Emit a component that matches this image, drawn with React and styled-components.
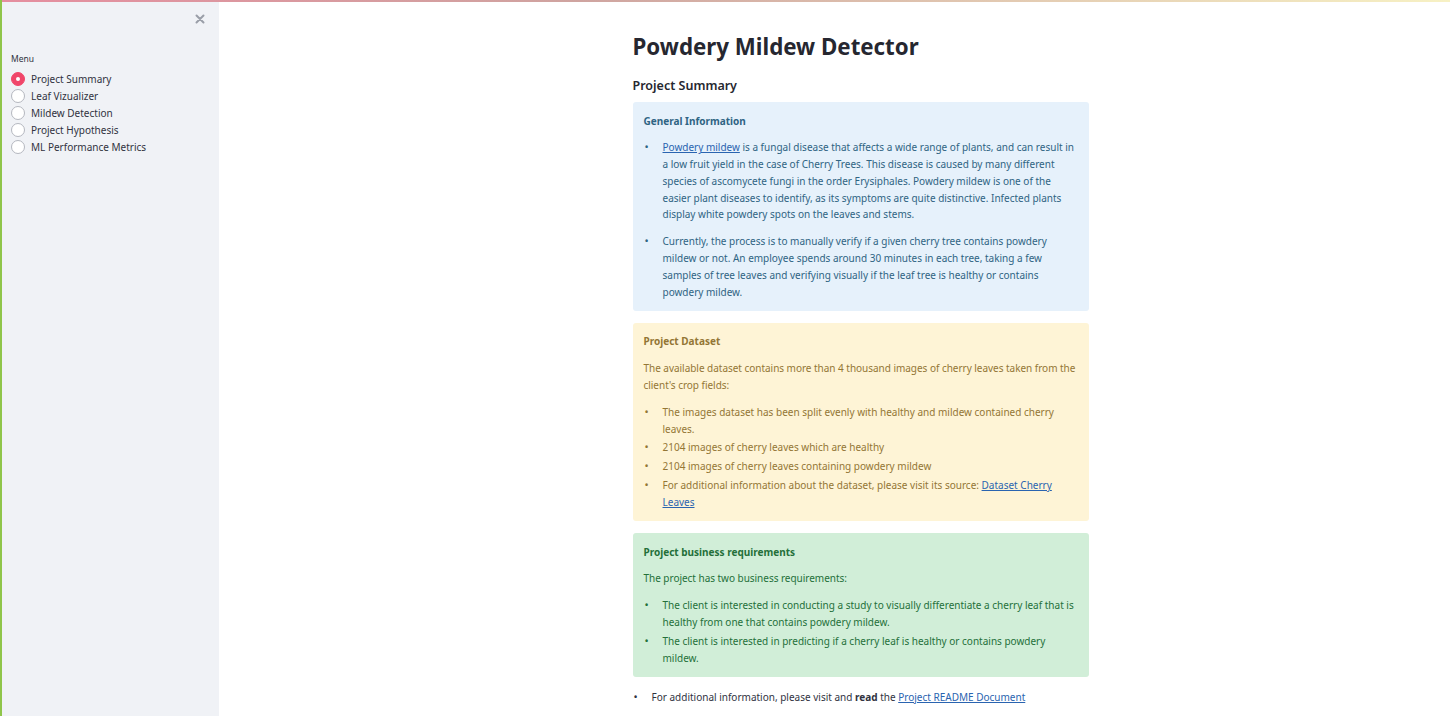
import React from "react";
import styled, { createGlobalStyle } from "styled-components";

const GlobalStyle = createGlobalStyle`
  html, body {
    margin: 0;
    padding: 0;
    background: #ffffff;
  }
  body {
    font-family: "Noto Sans", "Open Sans", sans-serif;
    color: #31333f;
  }
  * {
    box-sizing: border-box;
  }
`;

const Shell = styled.div`
  display: flex;
  flex-direction: column;
  min-height: 100vh;
  border-left: 2px solid #8fc54a;
`;

const Decoration = styled.div`
  height: 2px;
  background: linear-gradient(90deg, #e58e9f, #cfa4a0 40%, #f7f1c4);
`;

const Body = styled.div`
  display: flex;
  flex: 1;
`;

const Sidebar = styled.aside`
  width: 217px;
  flex-shrink: 0;
  background: #f0f2f6;
  display: flex;
  flex-direction: column;
`;

const SidebarTop = styled.div`
  display: flex;
  justify-content: flex-end;
  padding: 10px 12px 0 0;
  height: 51px;
`;

const CloseButton = styled.button`
  border: none;
  background: transparent;
  padding: 0;
  width: 14px;
  height: 14px;
  display: flex;
  align-items: center;
  justify-content: center;
  cursor: pointer;
`;

const MenuBlock = styled.div`
  padding: 0 0 0 9px;
  display: flex;
  flex-direction: column;
`;

const MenuLabel = styled.div`
  font-size: 8.5px;
  color: #31333f;
  margin-bottom: 7px;
`;

const RadioList = styled.div`
  display: flex;
  flex-direction: column;
`;

const RadioRow = styled.label`
  display: flex;
  align-items: center;
  gap: 6px;
  height: 16.8px;
  font-size: 10px;
  color: #31333f;
  cursor: pointer;
`;

const RadioDot = styled.span`
  width: 14px;
  height: 14px;
  border-radius: 50%;
  flex-shrink: 0;
  display: flex;
  align-items: center;
  justify-content: center;
  background: ${(p) => (p.$active ? "#f0466a" : "#ffffff")};
  border: 1px solid ${(p) => (p.$active ? "#f0466a" : "#b4b7bf")};

  &::after {
    content: "";
    width: 4px;
    height: 4px;
    border-radius: 50%;
    background: #ffffff;
    display: ${(p) => (p.$active ? "block" : "none")};
  }
`;

const Main = styled.main`
  flex: 1;
  display: flex;
  justify-content: center;
  padding-left: 52px;
`;

const Content = styled.div`
  width: 456px;
  padding-top: 31px;
  display: flex;
  flex-direction: column;
`;

const Title = styled.h1`
  margin: 0;
  font-size: 22.3px;
  line-height: 28px;
  font-weight: 700;
  color: #262730;
`;

const SubTitle = styled.h3`
  margin: 16px 0 8px;
  font-size: 12.5px;
  line-height: 17px;
  font-weight: 600;
  color: #262730;
`;

const tones = {
  info: { bg: "#e6f1fb", fg: "#2f6483" },
  warning: { bg: "#fef4d6", fg: "#937635" },
  success: { bg: "#d1eed8", fg: "#24703a" },
};

const Alert = styled.section`
  background: ${(p) => tones[p.$tone].bg};
  color: ${(p) => tones[p.$tone].fg};
  border-radius: 3px;
  padding: 10.5px 11px;
  margin-bottom: 12px;
  font-size: 10px;
  line-height: 16.8px;
`;

const AlertHeading = styled.div`
  font-weight: 700;
  margin-bottom: 10px;
`;

const Para = styled.p`
  margin: 0 0 10px;
  letter-spacing: -0.03px;
`;

const List = styled.ul`
  margin: 0;
  padding: 0;
  list-style: none;
  display: flex;
  flex-direction: column;
  gap: ${(p) => p.$gap || 0}px;
`;

const ListItem = styled.li`
  display: grid;
  grid-template-columns: 19px 1fr;

  &::before {
    content: "•";
    padding-left: 1px;
    font-size: 11px;
  }
`;

const Link = styled.a`
  color: #2a64b0;
  text-decoration: underline;
`;

const Footer = styled.div`
  font-size: 10px;
  line-height: 16.8px;
  color: #31333f;
`;

const Item = ({ children }) => (
  <ListItem>
    <span>{children}</span>
  </ListItem>
);

const menu = [
  "Project Summary",
  "Leaf Vizualizer",
  "Mildew Detection",
  "Project Hypothesis",
  "ML Performance Metrics",
];

export default function App() {
  return (
    <>
      <GlobalStyle />
      <Shell>
        <Decoration />
        <Body>
          <Sidebar>
            <SidebarTop>
              <CloseButton aria-label="Close sidebar">
                <svg width="10" height="10" viewBox="0 0 10 10">
                  <path
                    d="M1.5 1.5 L8.5 8.5 M8.5 1.5 L1.5 8.5"
                    stroke="#9a9ea8"
                    strokeWidth="2"
                    strokeLinecap="round"
                  />
                </svg>
              </CloseButton>
            </SidebarTop>
            <MenuBlock>
              <MenuLabel>Menu</MenuLabel>
              <RadioList>
                {menu.map((m, i) => (
                  <RadioRow key={m}>
                    <RadioDot $active={i === 0} />
                    {m}
                  </RadioRow>
                ))}
              </RadioList>
            </MenuBlock>
          </Sidebar>
          <Main>
            <Content>
              <Title>Powdery Mildew Detector</Title>
              <SubTitle>Project Summary</SubTitle>

              <Alert $tone="info">
                <AlertHeading>General Information</AlertHeading>
                <List $gap={10}>
                  <Item>
                    <Link href="#">Powdery mildew</Link> is a fungal disease that
                    affects a wide range of plants, and can result in a low fruit
                    yield in the case of Cherry Trees. This disease is caused by
                    many different species of ascomycete fungi in the order
                    Erysiphales. Powdery mildew is one of the easier plant diseases
                    to identify, as its symptoms are quite distinctive. Infected
                    plants display white powdery spots on the leaves and stems.
                  </Item>
                  <Item>
                    Currently, the process is to manually verify if a given cherry
                    tree contains powdery mildew or not. An employee spends around
                    30 minutes in each tree, taking a few samples of tree leaves and
                    verifying visually if the leaf tree is healthy or contains
                    powdery mildew.
                  </Item>
                </List>
              </Alert>

              <Alert $tone="warning">
                <AlertHeading>Project Dataset</AlertHeading>
                <Para>
                  The available dataset contains more than 4 thousand images of
                  cherry leaves taken from the client's crop fields:
                </Para>
                <List $gap={2}>
                  <Item>
                    The images dataset has been split evenly with healthy and
                    mildew contained cherry leaves.
                  </Item>
                  <Item>2104 images of cherry leaves which are healthy</Item>
                  <Item>2104 images of cherry leaves containing powdery mildew</Item>
                  <Item>
                    For additional information about the dataset, please visit its
                    source: <Link href="#">Dataset Cherry Leaves</Link>
                  </Item>
                </List>
              </Alert>

              <Alert $tone="success">
                <AlertHeading>Project business requirements</AlertHeading>
                <Para>The project has two business requirements:</Para>
                <List $gap={2}>
                  <Item>
                    The client is interested in conducting a study to visually
                    differentiate a cherry leaf that is healthy from one that
                    contains powdery mildew.
                  </Item>
                  <Item>
                    The client is interested in predicting if a cherry leaf is
                    healthy or contains powdery mildew.
                  </Item>
                </List>
              </Alert>

              <Footer>
                <List>
                  <Item>
                    For additional information, please visit and <b>read</b> the{" "}
                    <Link href="#">Project README Document</Link>
                  </Item>
                </List>
              </Footer>
            </Content>
          </Main>
        </Body>
      </Shell>
    </>
  );
}
